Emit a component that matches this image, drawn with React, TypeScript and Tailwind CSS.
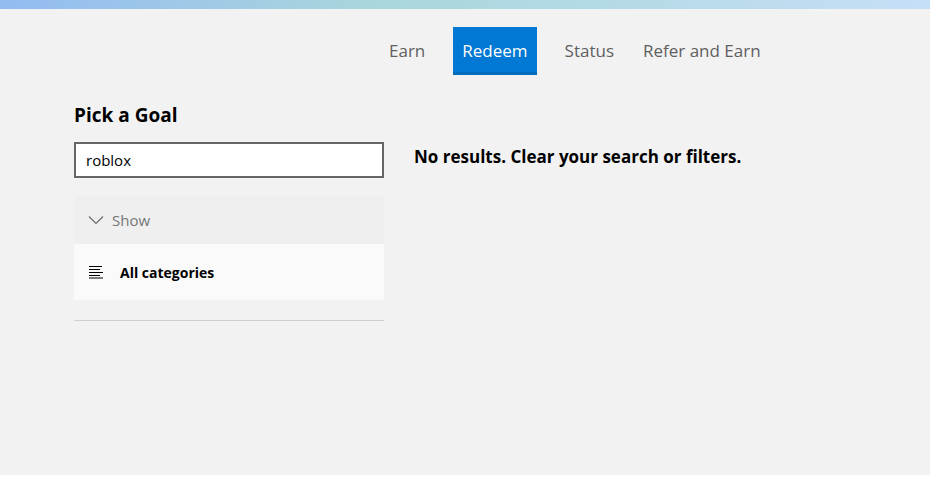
export default function App() {
  return (
    <div className="w-[930px] h-[489px] bg-white" style={{ fontFamily: '"Open Sans", "Noto Sans", sans-serif' }}>
      <div className="h-[475px] bg-[#f2f2f2]">
        <div className="h-[9px] bg-gradient-to-r from-[#93bbf1] via-[#a9d6dc] via-40% to-[#c5dff6]" />

        <nav className="flex items-start pl-[380px] pt-[18px]">
          <a className="h-[48px] px-[9px] flex items-center text-[17px] text-[#5f5f5f]">Earn</a>
          <a className="ml-[19px] h-[48px] px-[9px] flex items-center text-[17px] text-white bg-[#0078d4] border-b-[3px] border-[#006cbe] pt-[3px]">
            Redeem
          </a>
          <a className="ml-[19px] h-[48px] px-[9px] flex items-center text-[17px] text-[#5f5f5f]">Status</a>
          <a className="ml-[11px] h-[48px] px-[9px] flex items-center text-[17px] text-[#5f5f5f]">Refer and Earn</a>
        </nav>

        <div className="flex gap-[30px] pl-[74px] pt-[27px]">
          <aside className="w-[310px]">
            <h2 className="text-[19px] font-bold text-black leading-[26px]">Pick a Goal</h2>
            <div className="mt-[14px] h-[36px] border-2 border-[#666666] bg-white flex items-center px-[10px]">
              <span className="text-[15px] text-black">roblox</span>
            </div>

            <div className="mt-[18px] h-[48px] bg-[#efefef] flex items-center px-[14px] gap-[8px]">
              <svg width="16" height="10" viewBox="0 0 16 10" fill="none" stroke="#6b6b6b" strokeWidth="1.2">
                <path d="M1 1.5 L8 8.5 L15 1.5" />
              </svg>
              <span className="text-[15px] text-[#767676]">Show</span>
            </div>
            <div className="h-[56px] bg-[#fafafa] flex items-center px-[14px] gap-[16px]">
              <svg width="16" height="14" viewBox="0 0 16 14" fill="none" stroke="#000" strokeWidth="1.2">
                <path d="M1 1.5 H14 M1 4.5 H12 M1 7.5 H15 M1 10.5 H12 M1 13 H15" />
              </svg>
              <span className="text-[14px] font-bold text-black">All categories</span>
            </div>

            <div className="mt-[20px] h-px bg-[#cfcfcf]" />
          </aside>

          <section className="pt-[42px]">
            <p className="text-[17px] font-bold text-black">No results. Clear your search or filters.</p>
          </section>
        </div>
      </div>
    </div>
  );
}
